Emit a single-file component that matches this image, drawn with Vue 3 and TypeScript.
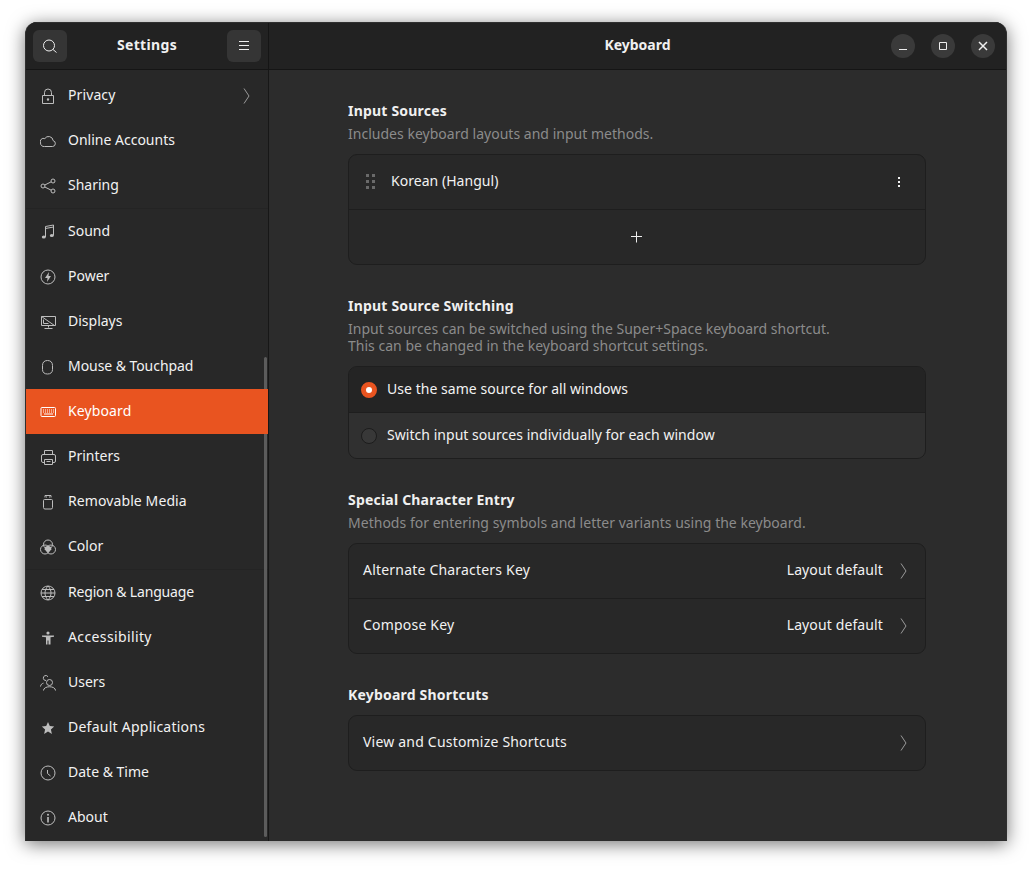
<script setup lang="ts">
interface Item { label: string; icon: string; active?: boolean; sepBefore?: boolean; chevron?: boolean; spacing?: number }

const circle = (cx: number, cy: number, r: number) =>
  `M${cx - r} ${cy}a${r} ${r} 0 1 0 ${r * 2} 0a${r} ${r} 0 1 0 ${-r * 2} 0Z`

const strokes: Record<string, string> = {
  lock: 'M2.500 7.500h11v8h-11zM4.500 7.500V4.500a3.500 3.500 0 0 1 7 0v3',
  cloud: 'M4.500 13.500h8a3 3 0 0 0 .6-5.900A4.500 4.500 0 0 0 4.800 5.600 3.300 3.300 0 0 0 .5 10a3.400 3.400 0 0 0 4 3.500Z',
  share: `${circle(3, 8, 2)}${circle(13, 3, 2)}${circle(13, 13, 2)}M4.800 7l6.400-3.200M4.800 9l6.400 3.200`,
  sound: 'M5.500 13V2.500L13.500 1v10.500M5.500 4.500L13.500 3',
  power: circle(8, 8, 7),
  display: 'M1.500 2.500h14v9h-14zM8.500 11.500v2M4.500 14.500h8M1.500 2.500l13 9M3.500 5.500v4h5',
  mouse: 'M7.500 1.500c3.400 0 5 2 5 5v4c0 3-2 4.500-5 4.500s-5-1.500-5-4.500v-4c0-3 1.600-5 5-5Z',
  keyboard: 'M2 3.500h12.500a1 1 0 0 1 1 1v7a1 1 0 0 1-1 1H2a1 1 0 0 1-1-1v-7a1 1 0 0 1 1-1Z',
  printer: 'M4.500 5.500v-4h8v4M3 5.500h11a1.500 1.500 0 0 1 1.500 1.500v5a1.500 1.500 0 0 1-1.500 1.500h-1.500M4.500 13.500H3A1.500 1.500 0 0 1 1.500 12V7A1.500 1.500 0 0 1 3 5.500M4.500 10.500h8v5h-8zM6.500 12.500h4',
  usb: 'M4.500 5.500h7a1 1 0 0 1 1 1v7a1.500 1.500 0 0 1-1.500 1.500H5A1.500 1.500 0 0 1 3.500 13.500v-7a1 1 0 0 1 1-1ZM5 3.500V1.500h6v2',
  color: `${circle(8, 5.500, 4.500)}${circle(5, 10.500, 4.500)}${circle(11, 10.500, 4.500)}`,
  globe: `${circle(8, 8, 7)}M8 1c-4 4-4 10 0 14M8 1c4 4 4 10 0 14M1 8h14M2 4.500h12M2 11.500h12`,
  users: `${circle(9.500, 7.500, 3)}M3.500 15.500c0-5 12-5 12 0M6 5.500A2.500 2.500 0 1 1 8 1.800M.5 11.500c.3-2 1.500-3 3-3.400`,
  clock: `${circle(8, 8, 7)}M7.500 5v3.500l3 2.500`,
  info: circle(8, 8, 7),
}
const fills: Record<string, string> = {
  lock: `${circle(8, 11.500, 1.200)}`,
  sound: 'M1.800 13a2 1.500 0 1 0 4 0a2 1.500 0 1 0-4 0ZM9.800 11.500a2 1.500 0 1 0 4 0a2 1.500 0 1 0-4 0Z',
  power: 'M9 3L5 9h2.500L7 13l4-6H8.500Z',
  keyboard: 'M3 5.500h1v1H3zM5 5.500h1v1H5zM7 5.500h1v1H7zM9 5.500h1v1H9zM11 5.500h1v1h-1zM13 5.500h1v1h-1zM3 7.500h1v1H3zM5 7.500h1v1H5zM7 7.500h1v1H7zM9 7.500h1v1H9zM11 7.500h1v1h-1zM13 7.500h1v1h-1zM4 9.500h9v1H4z',
  usb: 'M6 2.500h1v1H6zM9 2.500h1v1H9z',
  color: 'M8 6.500l3 1.500.5 2.500L8 13.500 4.500 10.500 5 8Z',
  access: `${circle(8, 3, 1.600)}M2 5.500h12v1.200l-3.500.5v7.300H8.500v-4h-1v4H6V7.200L2 6.700Z`,
  star: 'M8 2l1.800 4.100 4.400.4-3.300 3 1 4.400L8 11.600l-3.900 2.300 1-4.400-3.300-3 4.400-.4Z',
  info: `${circle(8, 4.700, 1)}M7.200 7h1.600v5.500H7.200Z`,
}

const items: Item[] = [
  { label: 'Privacy', icon: 'lock', chevron: true, spacing: 0.1 },
  { label: 'Online Accounts', icon: 'cloud' },
  { label: 'Sharing', icon: 'share' },
  { label: 'Sound', icon: 'sound', sepBefore: true },
  { label: 'Power', icon: 'power' },
  { label: 'Displays', icon: 'display' },
  { label: 'Mouse & Touchpad', icon: 'mouse', spacing: -0.06 },
  { label: 'Keyboard', icon: 'keyboard', active: true, spacing: 0.12 },
  { label: 'Printers', icon: 'printer' },
  { label: 'Removable Media', icon: 'usb', spacing: 0.1 },
  { label: 'Color', icon: 'color' },
  { label: 'Region & Language', icon: 'globe', sepBefore: true, spacing: -0.18 },
  { label: 'Accessibility', icon: 'access', spacing: 0.38 },
  { label: 'Users', icon: 'users' },
  { label: 'Default Applications', icon: 'star', spacing: 0.25 },
  { label: 'Date & Time', icon: 'clock' },
  { label: 'About', icon: 'info' },
]
const spacingOf = (item: Item) => (item.spacing ? { letterSpacing: `${item.spacing}px` } : undefined)
</script>

<template>
  <div class="page">
    <div class="window">
      <header class="titlebar">
        <div class="title-left">
          <button class="tool">
            <svg width="16" height="16" viewBox="0 0 16 16"><path class="line" d="M12.500 7.500a5.500 5.500 0 1 1-11 0 5.500 5.500 0 0 1 11 0ZM11 11.500l3.500 3" /></svg>
          </button>
          <span class="title title-side">Settings</span>
          <button class="tool">
            <svg width="16" height="16" viewBox="0 0 16 16"><path class="line" d="M3 3.500h10M3 7.500h10M3 11.500h10" /></svg>
          </button>
        </div>
        <div class="title-right">
          <span class="title">Keyboard</span>
          <div class="win-buttons">
            <button class="win-btn"><svg width="16" height="16" viewBox="0 0 16 16"><path class="line" d="M4 11.500h8" /></svg></button>
            <button class="win-btn"><svg width="16" height="16" viewBox="0 0 16 16"><path class="line" d="M4.500 4.500h7v7h-7z" /></svg></button>
            <button class="win-btn"><svg width="16" height="16" viewBox="0 0 16 16"><path class="line bold" d="M4 4l8 8M12 4l-8 8" /></svg></button>
          </div>
        </div>
      </header>
      <div class="body">
        <aside class="sidebar">
          <div v-for="item in items" :key="item.label" class="nav-row" :class="{ active: item.active, sep: item.sepBefore }">
            <svg class="nav-icon" width="16" height="16" viewBox="0 0 16 16">
              <path v-if="strokes[item.icon]" class="ico-stroke" :d="strokes[item.icon]" />
              <path v-if="fills[item.icon]" class="ico-fill" :d="fills[item.icon]" />
            </svg>
            <span class="nav-label" :style="spacingOf(item)">{{ item.label }}</span>
            <svg v-if="item.chevron" class="chev nav-chev" width="8" height="16" viewBox="0 0 8 16"><path d="M1 .5l5 7.500-5 7.500" /></svg>
          </div>
          <div class="scrollbar"></div>
        </aside>
        <main class="content">
          <div class="column">
            <section class="section">
              <h2>Input Sources</h2>
              <p>Includes keyboard layouts and input methods.</p>
              <div class="box">
                <div class="row row-source">
                  <svg class="grip" width="10" height="16" viewBox="0 0 10 16"><path d="M0 0h3v3H0zM6 0h3v3H6zM0 6h3v3H0zM6 6h3v3H6zM0 12h3v3H0zM6 12h3v3H6z" /></svg>
                  <span class="grow label">Korean (Hangul)</span>
                  <svg class="dots" width="2" height="10" viewBox="0 0 2 10"><path d="M0 0h2v2H0zM0 4h2v2H0zM0 8h2v2H0z" /></svg>
                </div>
                <div class="row row-add">
                  <svg width="12" height="12" viewBox="0 0 12 12"><path class="line" d="M5.500 .5v11M0 5.500h11" /></svg>
                </div>
              </div>
            </section>
            <section class="section">
              <h2>Input Source Switching</h2>
              <p>Input sources can be switched using the Super+Space keyboard shortcut.<br />This can be changed in the keyboard shortcut settings.</p>
              <div class="box">
                <div class="row radio-row selected"><span class="radio on"></span><span class="label">Use the same source for all windows</span></div>
                <div class="row radio-row plain"><span class="radio"></span><span class="label">Switch input sources individually for each window</span></div>
              </div>
            </section>
            <section class="section">
              <h2>Special Character Entry</h2>
              <p>Methods for entering symbols and letter variants using the keyboard.</p>
              <div class="box">
                <div class="row link-row">
                  <span class="grow label wide">Alternate Characters Key</span>
                  <span class="label value">Layout default</span>
                  <svg class="chev" width="8" height="16" viewBox="0 0 8 16"><path d="M1 .5l5 7.500-5 7.500" /></svg>
                </div>
                <div class="row link-row">
                  <span class="grow label wide">Compose Key</span>
                  <span class="label value">Layout default</span>
                  <svg class="chev" width="8" height="16" viewBox="0 0 8 16"><path d="M1 .5l5 7.500-5 7.500" /></svg>
                </div>
              </div>
            </section>
            <section class="section">
              <h2 class="solo">Keyboard Shortcuts</h2>
              <div class="box">
                <div class="row link-row">
                  <span class="grow label wide">View and Customize Shortcuts</span>
                  <svg class="chev" width="8" height="16" viewBox="0 0 8 16"><path d="M1 .5l5 7.500-5 7.500" /></svg>
                </div>
              </div>
            </section>
          </div>
        </main>
      </div>
    </div>
  </div>
</template>

<style>
html, body { background: #fff; }
</style>

<style scoped>
.page {
  box-sizing: border-box;
  width: 1032px;
  height: 869px;
  padding: 22px 25px 28px;
  background: #fff;
  font-family: "Noto Sans", "Open Sans", sans-serif;
  font-size: 14px;
  color: #f2f2f2;
  overflow: hidden;
}
.window {
  box-sizing: border-box;
  display: flex;
  flex-direction: column;
  height: 819px;
  border-left: 1px solid #2f2f2f;
  border-right: 1px solid #2f2f2f;
  border-radius: 12px 12px 0 0;
  overflow: hidden;
  background: #2c2c2c;
  box-shadow: 0 3px 18px rgba(0, 0, 0, 0.55);
}
.titlebar {
  box-sizing: border-box;
  display: flex;
  flex: none;
  height: 48px;
  background: #222222;
  border-top: 1px solid #303030;
  border-bottom: 1px solid #151515;
}
.title-left {
  box-sizing: border-box;
  display: flex;
  align-items: center;
  justify-content: space-between;
  flex: none;
  width: 243px;
  padding: 0 7px;
  border-right: 1px solid #151515;
}
.title-right {
  position: relative;
  flex: 1;
  display: flex;
  align-items: center;
  justify-content: center;
}
.title {
  font-weight: 700;
  font-size: 14px;
  line-height: 18px;
  padding-bottom: 2px;
  color: #f0f0f0;
}
.title-side { letter-spacing: 0.35px; }
button {
  display: flex;
  align-items: center;
  justify-content: center;
  padding: 0;
  border: 0;
}
.tool {
  width: 34px;
  height: 32px;
  border-radius: 6px;
  background: #353535;
}
.win-buttons {
  position: absolute;
  top: 11px;
  right: 11px;
  display: flex;
  gap: 16px;
}
.win-btn {
  width: 24px;
  height: 24px;
  border-radius: 50%;
  background: #3a3a3a;
}
.line {
  fill: none;
  stroke: #eeeeee;
  stroke-width: 1;
}
.line.bold { stroke-width: 1.500; }
.body {
  flex: 1;
  display: flex;
  min-height: 0;
}
.sidebar {
  position: relative;
  box-sizing: border-box;
  flex: none;
  width: 243px;
  padding-top: 3px;
  background: #282828;
  border-right: 1px solid #171717;
  overflow: hidden;
}
.nav-row {
  box-sizing: border-box;
  display: flex;
  align-items: center;
  gap: 12px;
  height: 45px;
  padding: 0 14px;
}
.nav-row.sep {
  height: 46px;
  border-top: 1px solid #242424;
}
.nav-row.active {
  position: relative;
  z-index: 1;
  background: #e95420;
  color: #fff;
}
.nav-label {
  flex: 1;
  line-height: 18px;
  padding-bottom: 2px;
}
.nav-icon { flex: none; }
.ico-stroke {
  fill: none;
  stroke: #bdbdbd;
  stroke-width: 1;
}
.ico-fill { fill: #bdbdbd; }
.active .ico-stroke { stroke: #fff; }
.active .ico-fill { fill: #fff; }
.chev { flex: none; }
.chev path {
  fill: none;
  stroke: #9a9a9a;
  stroke-width: 1;
}
.nav-chev { margin-right: 3px; }
.scrollbar {
  position: absolute;
  top: 287px;
  right: 1px;
  width: 3px;
  height: 480px;
  border-radius: 2px;
  background: #5c5c5c;
}
.content {
  flex: 1;
  display: flex;
  justify-content: center;
  min-width: 0;
}
.column {
  width: 578px;
  padding-top: 32px;
  margin-left: -1px;
}
.section { margin-bottom: 32px; }
h2 {
  margin: 0;
  font-size: 14px;
  line-height: 17px;
  padding-bottom: 2px;
  font-weight: 700;
  letter-spacing: 0.2px;
  color: #f0f0f0;
}
h2.solo { margin-bottom: 10px; }
p {
  margin: 4px 0 12px;
  font-size: 14px;
  line-height: 17px;
  letter-spacing: 0.02px;
  color: #8b8b8b;
}
.box {
  box-sizing: border-box;
  border: 1px solid #1e1e1e;
  border-radius: 9px;
  background: #282828;
  overflow: hidden;
}
.row {
  box-sizing: border-box;
  display: flex;
  align-items: center;
  height: 54px;
  padding: 0 14px;
}
.row + .row {
  height: 55px;
  border-top: 1px solid #1e1e1e;
}
.label {
  line-height: 18px;
  padding-bottom: 2px;
  letter-spacing: 0.04px;
}
.label.wide { letter-spacing: 0.2px; }
.label.value { letter-spacing: 0.12px; }
.grow { flex: 1; }
.row-source { padding: 0 25px 0 17px; }
.grip { margin-right: 15px; fill: #6a6a6a; }
.dots { fill: #f0f0f0; }
.row-add { justify-content: center; }
.radio-row {
  height: 45px;
  padding: 0 12px;
  gap: 10px;
}
.row.radio-row + .row.radio-row { height: 46px; }
.radio-row.selected { background: #242424; }
.radio-row.plain { background: #303030; }
.radio {
  box-sizing: border-box;
  width: 16px;
  height: 16px;
  border-radius: 50%;
  border: 1px solid #1c1c1c;
  background: #383838;
}
.radio.on {
  border: 5px solid #e95420;
  background: #fff;
}
.link-row { gap: 17px; padding-right: 17px; }
</style>
